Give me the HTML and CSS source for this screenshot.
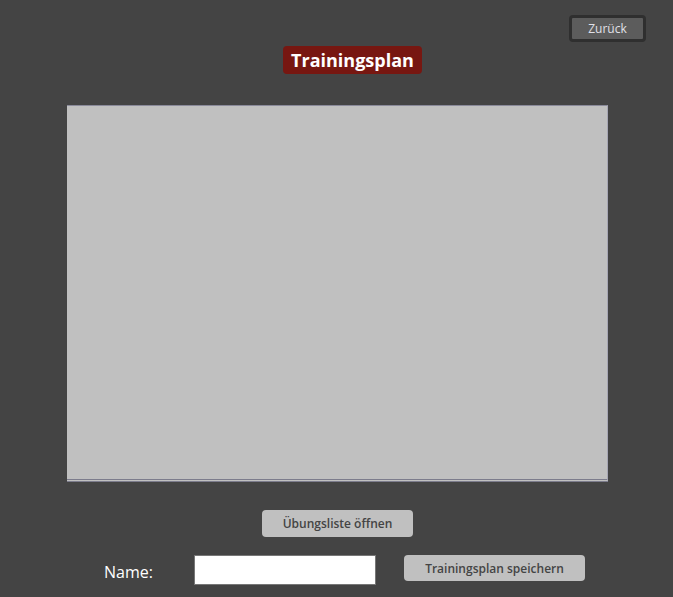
FILE: index.html
```html
<!DOCTYPE html>
<html lang="de">
<head>
<meta charset="utf-8">
<title>Trainingsplan</title>
<link rel="stylesheet" href="styles.css">
</head>
<body>
<div class="page">
  <div class="top-row">
    <button class="back-btn">Zurück</button>
  </div>
  <div class="title-row">
    <h1 class="title">Trainingsplan</h1>
  </div>
  <div class="canvas-row">
    <div class="plan-canvas"></div>
  </div>
  <div class="list-row">
    <button class="grey-btn list-btn">Übungsliste öffnen</button>
  </div>
  <div class="save-row">
    <label class="name-label" for="name">Name:</label>
    <input class="name-input" id="name" type="text">
    <button class="grey-btn save-btn">Trainingsplan speichern</button>
  </div>
</div>
</body>
</html>
```

FILE: styles.css
```css
html, body {
  margin: 0;
  padding: 0;
  background: #444444;
  height: 100%;
}
body {
  font-family: "Open Sans", "DejaVu Sans", sans-serif;
}
.page {
  width: 673px;
  height: 597px;
  display: flex;
  flex-direction: column;
}
.top-row {
  display: flex;
  justify-content: flex-end;
  padding: 15px 27px 0 0;
}
.back-btn {
  width: 77px;
  height: 27px;
  background: #5c5c5c;
  border: 3px solid #2f2f2f;
  border-radius: 4px;
  color: #e0e0e8;
  font-family: "Open Sans", sans-serif;
  font-size: 12px;
  padding: 0;
  line-height: 19px;
}
.title-row {
  display: flex;
  justify-content: center;
  padding-left: 32px;
  margin-top: 4px;
}
.title {
  margin: 0;
  background: #771711;
  color: #ffffff;
  font-family: "Open Sans", sans-serif;
  font-weight: 700;
  font-size: 18px;
  line-height: 28px;
  height: 28px;
  padding: 0 8px;
  border-radius: 4px;
}
.canvas-row {
  display: flex;
  justify-content: center;
  padding-left: 1px;
  margin-top: 31px;
}
.plan-canvas {
  width: 540px;
  height: 373px;
  background: #c0c0c0;
  border-top: 1px solid #8a8a9a;
  border-right: 1px solid #a6a6b4;
  border-bottom: 3px double #7c7c8c;
}
.list-row {
  display: flex;
  justify-content: center;
  padding-left: 2px;
  margin-top: 28px;
}
.grey-btn {
  background: #c0c0c0;
  border: none;
  border-radius: 4px;
  color: #444444;
  font-family: "Open Sans", sans-serif;
  font-weight: 600;
  font-size: 12px;
  padding: 0;
}
.list-btn {
  width: 151px;
  height: 27px;
}
.save-row {
  display: flex;
  align-items: flex-start;
  margin-top: 18px;
  padding-left: 104px;
}
.name-label {
  color: #ffffff;
  font-family: "Open Sans", sans-serif;
  font-size: 16px;
  line-height: 20px;
  margin-top: 7px;
  width: 90px;
}
.name-input {
  box-sizing: border-box;
  width: 182px;
  height: 30px;
  margin: 0;
  border: 1px solid #777777;
  background: #ffffff;
  padding: 0 4px;
}
.save-btn {
  width: 181px;
  height: 26px;
  margin-left: 28px;
}
```
